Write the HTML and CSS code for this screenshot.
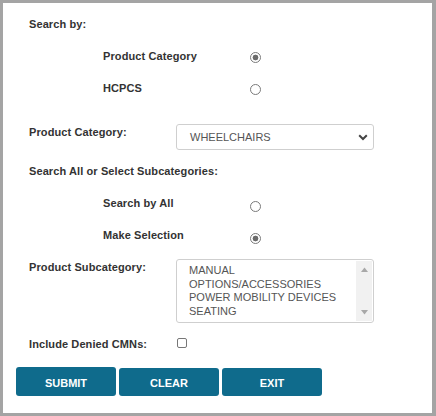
FILE: index.html
```html
<!DOCTYPE html>
<html>
<head>
<meta charset="utf-8">
<link rel="stylesheet" href="styles.css">
</head>
<body>
<div class="panel">
  <div class="row head"><span class="lbl">Search by:</span></div>
  <div class="row opt"><span class="olbl">Product Category</span><span class="radio checked"></span></div>
  <div class="row opt"><span class="olbl">HCPCS</span><span class="radio"></span></div>

  <div class="field cat">
    <span class="lbl flab">Product Category:</span>
    <div class="select">
      <span class="sel-text">WHEELCHAIRS</span>
      <svg class="chev" width="10" height="7" viewBox="0 0 10 7"><path d="M1.2 1.3 L5 5 L8.8 1.3" fill="none" stroke="#444" stroke-width="2"/></svg>
    </div>
  </div>

  <div class="row head"><span class="lbl">Search All or Select Subcategories:</span></div>
  <div class="row opt low"><span class="olbl">Search by All</span><span class="radio"></span></div>
  <div class="row opt low"><span class="olbl">Make Selection</span><span class="radio checked"></span></div>

  <div class="field sub">
    <span class="lbl flab">Product Subcategory:</span>
    <div class="listbox">
      <div class="items">
        <div>MANUAL</div>
        <div>OPTIONS/ACCESSORIES</div>
        <div>POWER MOBILITY DEVICES</div>
        <div>SEATING</div>
      </div>
      <div class="scroll">
        <svg width="7" height="5" viewBox="0 0 7 5"><path d="M0 5 L3.5 0.5 L7 5Z" fill="#a8a8a8"/></svg>
        <svg width="7" height="5" viewBox="0 0 7 5"><path d="M0 0 L3.5 4.5 L7 0Z" fill="#a8a8a8"/></svg>
      </div>
    </div>
  </div>

  <div class="row chk"><span class="lbl flab">Include Denied CMNs:</span><span class="checkbox"></span></div>

  <div class="buttons">
    <button class="btn">SUBMIT</button>
    <button class="btn">CLEAR</button>
    <button class="btn">EXIT</button>
  </div>
</div>
</body>
</html>
```

FILE: styles.css
```css
html, body {
  margin: 0;
  padding: 0;
}
body {
  background: #a4a4a4;
  width: 436px;
  height: 416px;
  overflow: hidden;
  font-family: "Liberation Sans", Arial, sans-serif;
}
.panel {
  margin: 3px 4px 3px 3px;
  height: 410px;
  background: #fff;
  box-sizing: border-box;
  padding: 5px 0 0 26px;
  color: #333;
  font-size: 11px;
}
.row {
  display: flex;
  align-items: center;
  height: 32px;
}
.lbl {
  font-weight: bold;
  letter-spacing: 0.1px;
}
.opt {
  padding-left: 74px;
}
.olbl {
  font-weight: bold;
  width: 147px;
  letter-spacing: 0.1px;
}
.low .radio {
  margin-top: 6px;
}
.radio {
  display: inline-block;
  width: 9px;
  height: 9px;
  border: 1px solid #7a7a7a;
  border-radius: 50%;
  margin-top: 2px;
  background: #fff;
}
.radio.checked {
  background: radial-gradient(circle, #6a6a6a 0, #6a6a6a 2.6px, #fff 3.2px);
}
.field {
  display: flex;
  align-items: flex-start;
}
.flab {
  width: 147px;
  flex: none;
}
.cat {
  margin-top: 20px;
}
.cat .flab {
  padding-top: 2px;
}
.select {
  position: relative;
  width: 198px;
  height: 26px;
  box-sizing: border-box;
  border: 1px solid #cfcfcf;
  border-radius: 3px;
  display: flex;
  align-items: center;
  padding-left: 13px;
  color: #555;
}
.chev {
  position: absolute;
  right: 5px;
  top: 9px;
}
.cat + .row {
  margin-top: 5px;
}
.sub {
  margin-top: 8px;
}
.sub .flab {
  padding-top: 2px;
}
.listbox {
  width: 198px;
  height: 64px;
  box-sizing: border-box;
  border: 1px solid #cfcfcf;
  border-radius: 3px;
  display: flex;
  color: #555;
}
.items {
  flex: 1;
  padding: 4px 0 0 12px;
  line-height: 13.7px;
}
.scroll {
  width: 16px;
  background: #f1f1f1;
  display: flex;
  flex-direction: column;
  justify-content: space-between;
  align-items: center;
  padding: 6px 0 6px;
  margin: 1px 1px 1px 0;
}
.chk {
  margin-top: 5px;
}
.checkbox {
  display: inline-block;
  width: 8px;
  height: 8px;
  border: 1px solid #777;
  border-radius: 2px;
  margin-left: 1px;
  margin-top: -2px;
}
.buttons {
  display: flex;
  gap: 3px;
  margin-left: -13px;
  margin-top: 8px;
  align-items: flex-start;
}
.btn {
  width: 100px;
  height: 28px;
  margin: 0;
  border: none;
  border-radius: 3px;
  background: #0f6b8c;
  color: #fff;
  font-family: "Liberation Sans", Arial, sans-serif;
  font-weight: bold;
  font-size: 11px;
  padding: 2px 0 0;
}
.btn:first-child {
  height: 29px;
  margin-top: -1px;
  padding-top: 3px;
}
```
